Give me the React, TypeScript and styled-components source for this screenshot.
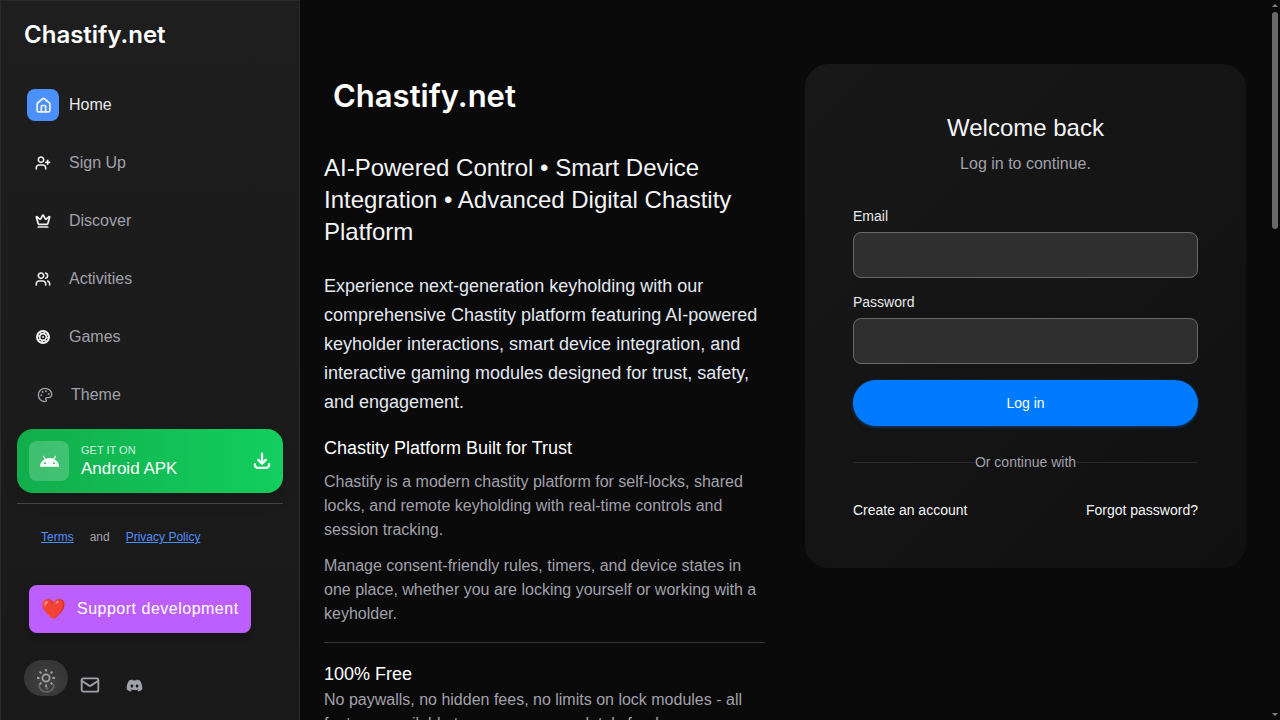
import React from "react";
import styled, { createGlobalStyle, css } from "styled-components";
import { House, UserPlus, Crown, Users, Palette, Mail } from "lucide-react";
import { MdAndroid } from "react-icons/md";
import { FaDiscord } from "react-icons/fa";

const sans = `"Liberation Sans", Arial, sans-serif`;

const Global = createGlobalStyle`
  *, *::before, *::after { box-sizing: border-box; }
  body { margin: 0; background: #0a0a0a; color: #fff; font-family: ${sans}; font-size: 16px; }
  h1, h2, h3, p { margin: 0; font-weight: 400; }
  a { color: inherit; text-decoration: none; }
  button { font: inherit; border: 0; padding: 0; background: none; color: inherit; cursor: pointer; }
`;

const Shell = styled.div`
  display: flex;
  height: 100vh;
  overflow: hidden;
`;

const Sidebar = styled.aside`
  display: flex;
  flex-direction: column;
  flex: 0 0 300px;
  padding: 0 16px;
  border: 1px solid #2a2a2a;
  border-bottom: 0;
  background: linear-gradient(180deg, #1e1e1e, #191919);
  overflow: hidden;
`;

const Wordmark = styled.a<{ $size: "small" | "large" }>`
  display: block;
  font-family: Inter, ${sans};
  font-weight: 600;
  color: #fff;
  ${(p) =>
    p.$size === "large"
      ? css`
          font-size: 31px;
          line-height: 64px;
          padding-left: 9px;
        `
      : css`
          font-size: 24px;
          line-height: 32px;
          padding: 18px 7px 25px;
        `}
`;

const NavList = styled.nav`
  display: flex;
  flex-direction: column;
`;

const NavItem = styled.a<{ $active?: boolean }>`
  display: flex;
  align-items: center;
  gap: 10px;
  height: 58px;
  padding-left: 10px;
  color: ${(p) => (p.$active ? "#e8e8ea" : "#a1a1aa")};
`;

const NavIcon = styled.span<{ $active?: boolean }>`
  display: grid;
  place-items: center;
  width: 32px;
  height: 32px;
  border-radius: 8px;
  color: #f0f0f2;
  background: ${(p) => (p.$active ? "#4a90ff" : "transparent")};
`;

const ThemeButton = styled.button`
  display: flex;
  align-items: center;
  gap: 18px;
  height: 58px;
  padding-left: 20px;
  color: #a1a1aa;
`;

const ApkLink = styled.a`
  display: flex;
  align-items: center;
  gap: 12px;
  flex: none;
  height: 64px;
  margin-top: 5px;
  padding: 12px;
  border-radius: 16px;
  background: linear-gradient(90deg, #12ad4c, #12cf5f);
  box-shadow: 0 8px 16px rgba(0, 0, 0, 0.12);
`;

const ApkIcon = styled.span`
  display: grid;
  place-items: center;
  width: 40px;
  height: 40px;
  border-radius: 8px;
  background: rgba(255, 255, 255, 0.2);
`;

const ApkText = styled.span`
  display: flex;
  flex-direction: column;
  flex: 1;
  font-size: 17px;
  line-height: 22px;
`;

const ApkCaption = styled.small`
  font-size: 11px;
  line-height: 16px;
  color: #d3f5e0;
`;

const Legal = styled.div`
  display: flex;
  gap: 16px;
  margin-top: 10px;
  padding: 25px 24px 40px;
  border-top: 1px solid #444;
  font-size: 12px;
  line-height: 16px;
  color: #a1a1aa;

  a {
    color: #4a90ff;
    text-decoration: underline;
  }
`;

const SupportButton = styled.a`
  display: flex;
  align-items: center;
  align-self: flex-start;
  gap: 11px;
  flex: none;
  height: 48px;
  margin-left: 12px;
  padding: 0 12px;
  border-radius: 8px;
  background: #bd5fff;
  letter-spacing: 0.5px;
  box-shadow: 0 4px 8px rgba(0, 0, 0, 0.2);
`;

const Heart = styled.span`
  font-size: 20px;
  letter-spacing: 0;
`;

const Utilities = styled.div`
  display: flex;
  align-items: flex-start;
  margin: 27px 0 0 7px;
  color: #a1a1aa;
`;

const ModeToggle = styled.button`
  display: grid;
  place-items: center;
  width: 44px;
  height: 36px;
  border-radius: 18px;
  background: radial-gradient(circle at 50% 60%, #424242, #303030);
`;

const UtilityLink = styled.a`
  display: grid;
  place-items: center;
  width: 44px;
  height: 36px;
  margin-top: 7px;
`;

const Main = styled.main`
  flex: 1;
  min-width: 0;
  overflow-y: auto;
  scrollbar-width: none;
  padding: 64px 34px 64px 24px;
`;

const Columns = styled.div`
  display: grid;
  grid-template-columns: 1fr 1fr;
  align-items: start;
  gap: 40px;
`;

const Intro = styled.section`
  display: flex;
  flex-direction: column;
`;

const Headline = styled.h1`
  margin-top: 24px;
  font-size: 24px;
  line-height: 32px;
  color: #f3f4f6;
`;

const Lead = styled.p`
  margin-top: 24px;
  font-size: 18px;
  line-height: 29px;
  color: #e2e8f0;
`;

const Subheading = styled.h2`
  font-size: 18px;
  line-height: 28px;
`;

const Body = styled.p`
  margin-bottom: 12px;
  line-height: 24px;
  color: #a1a1aa;
`;

const TrustBlock = styled.div`
  display: flex;
  flex-direction: column;
  margin-top: 17px;
  padding-bottom: 4px;
  border-bottom: 1px solid #333;

  h2 {
    margin-bottom: 8px;
  }
`;

const Feature = styled.div`
  margin-top: 17px;
`;

const Card = styled.form`
  display: flex;
  flex-direction: column;
  padding: 48px;
  border-radius: 24px;
  background: linear-gradient(135deg, #181818, #101010);
`;

const CardTitle = styled.h2`
  font-size: 24px;
  line-height: 32px;
  text-align: center;
  color: #f3f4f6;
`;

const CardNote = styled.p`
  margin: 8px 0 32px;
  line-height: 24px;
  text-align: center;
  color: #a1a1aa;
`;

const Field = styled.label`
  display: flex;
  flex-direction: column;
  gap: 8px;
  margin-bottom: 16px;
  font-size: 14px;
  line-height: 16px;
  color: #e8e8ea;
`;

const Input = styled.input`
  width: 100%;
  height: 46px;
  padding: 0 12px;
  border: 1px solid #686868;
  border-radius: 8px;
  background: #2f2f2f;
  color: #fff;
  font: inherit;
`;

const Submit = styled.button`
  height: 46px;
  border-radius: 24px;
  background: #007aff;
  font-size: 14px;
  box-shadow: 0 1px 3px rgba(0, 122, 255, 0.5);
`;

const Divider = styled.div`
  display: flex;
  align-items: center;
  margin: 26px 0 28px;
  font-size: 14px;
  line-height: 20px;
  color: #a1a1aa;

  &::before,
  &::after {
    content: "";
    flex: 1;
    height: 1px;
    background: #2a2a2a;
  }
`;

const CardLinks = styled.div`
  display: flex;
  justify-content: space-between;
  font-size: 14px;
  line-height: 20px;
  color: #f3f4f6;
`;

const ScrollRail = styled.div`
  position: fixed;
  top: 0;
  right: 0;
  bottom: 0;
  display: flex;
  flex-direction: column;
  align-items: center;
  width: 10px;
  padding: 4px 0;
`;

const ScrollThumb = styled.span`
  width: 6px;
  height: 217px;
  margin: 5px 0 auto;
  border-radius: 3px;
  background: #686868;
`;

function TargetIcon() {
  return (
    <svg width="16" height="16" viewBox="0 0 24 24" fill="none" stroke="currentColor">
      <circle cx="12" cy="12" r="9" strokeWidth="3" />
      <circle cx="12" cy="12" r="5" strokeWidth="2.5" />
      <circle cx="12" cy="12" r="7" strokeWidth="2" strokeDasharray="2 3.5" />
      <circle cx="12" cy="12" r="1.5" fill="currentColor" stroke="none" />
    </svg>
  );
}

function DownloadIcon() {
  return (
    <svg
      width="18"
      height="18"
      viewBox="0 0 24 24"
      fill="none"
      stroke="currentColor"
      strokeWidth="3"
      strokeLinecap="round"
      strokeLinejoin="round"
    >
      <path d="M12 2v13M7 10.500l5 5 5-5M2.500 16v1a4 4 0 0 0 4 4h11a4 4 0 0 0 4-4v-1" />
    </svg>
  );
}

function SunMoonIcon() {
  return (
    <svg width="24" height="36" viewBox="0 0 24 36" fill="none" stroke="currentColor" strokeWidth="1.8">
      <g opacity="0.4">
        <path d="M5 24.500a7.300 7.300 0 0 0 15 0" />
        <circle cx="13" cy="28" r="0.6" />
      </g>
      <circle cx="12" cy="18" r="3.600" />
      <path d="M12 9v2.500M12 24.500v2.500M3 18h2.500M18.500 18h2.500M5.600 11.600l1.800 1.800M16.600 22.600l1.800 1.800M5.600 24.400l1.800-1.800M16.600 13.400l1.800-1.800" />
    </svg>
  );
}

function Arrow({ down = false }: { down?: boolean }) {
  return (
    <svg width="6" height="3" viewBox="0 0 6 3" fill="#808080">
      <path d={down ? "M0 0h6L3 3z" : "M0 3h6L3 0z"} />
    </svg>
  );
}

const links = [
  { label: "Home", icon: <House size={17} strokeWidth={2.4} />, active: true },
  { label: "Sign Up", icon: <UserPlus size={16} strokeWidth={2.4} /> },
  { label: "Discover", icon: <Crown size={16} strokeWidth={2.6} /> },
  { label: "Activities", icon: <Users size={16} strokeWidth={2.4} /> },
  { label: "Games", icon: <TargetIcon /> },
];

export default function App() {
  return (
    <>
      <Global />
      <Shell>
        <Sidebar>
          <Wordmark $size="small" href="#">Chastify.net</Wordmark>
          <NavList>
            {links.map((l) => (
              <NavItem key={l.label} href="#" $active={l.active}>
                <NavIcon $active={l.active}>{l.icon}</NavIcon>
                {l.label}
              </NavItem>
            ))}
            <ThemeButton type="button">
              <Palette size={16} />
              Theme
            </ThemeButton>
          </NavList>
          <ApkLink href="#">
            <ApkIcon><MdAndroid size={21} /></ApkIcon>
            <ApkText>
              <ApkCaption>GET IT ON</ApkCaption>
              Android APK
            </ApkText>
            <DownloadIcon />
          </ApkLink>
          <Legal>
            <a href="#">Terms</a>
            <span>and</span>
            <a href="#">Privacy Policy</a>
          </Legal>
          <SupportButton href="#">
            <Heart>❤️</Heart>
            Support development
          </SupportButton>
          <Utilities>
            <ModeToggle type="button" aria-label="Toggle color mode">
              <SunMoonIcon />
            </ModeToggle>
            <UtilityLink href="#" aria-label="Email"><Mail size={20} strokeWidth={2.2} /></UtilityLink>
            <UtilityLink href="#" aria-label="Discord"><FaDiscord size={17} /></UtilityLink>
          </Utilities>
        </Sidebar>
        <Main>
          <Columns>
            <Intro>
              <Wordmark $size="large" href="#">Chastify.net</Wordmark>
              <Headline>AI-Powered Control • Smart Device Integration • Advanced Digital Chastity Platform</Headline>
              <Lead>
                Experience next-generation keyholding with our comprehensive Chastity platform featuring AI-powered
                keyholder interactions, smart device integration, and interactive gaming modules designed for trust,
                safety, and engagement.
              </Lead>
              <TrustBlock>
                <Subheading>Chastity Platform Built for Trust</Subheading>
                <Body>
                  Chastify is a modern chastity platform for self-locks, shared locks, and remote keyholding with
                  real-time controls and session tracking.
                </Body>
                <Body>
                  Manage consent-friendly rules, timers, and device states in one place, whether you are locking
                  yourself or working with a keyholder.
                </Body>
              </TrustBlock>
              <Feature>
                <Subheading>100% Free</Subheading>
                <Body>
                  No paywalls, no hidden fees, no limits on lock modules - all features available to everyone,
                  completely free!
                </Body>
              </Feature>
            </Intro>
            <Card>
              <CardTitle>Welcome back</CardTitle>
              <CardNote>Log in to continue.</CardNote>
              <Field>
                Email
                <Input type="email" />
              </Field>
              <Field>
                Password
                <Input type="password" />
              </Field>
              <Submit type="submit">Log in</Submit>
              <Divider>Or continue with</Divider>
              <CardLinks>
                <a href="#">Create an account</a>
                <a href="#">Forgot password?</a>
              </CardLinks>
            </Card>
          </Columns>
        </Main>
      </Shell>
      <ScrollRail aria-hidden="true">
        <Arrow />
        <ScrollThumb />
        <Arrow down />
      </ScrollRail>
    </>
  );
}
